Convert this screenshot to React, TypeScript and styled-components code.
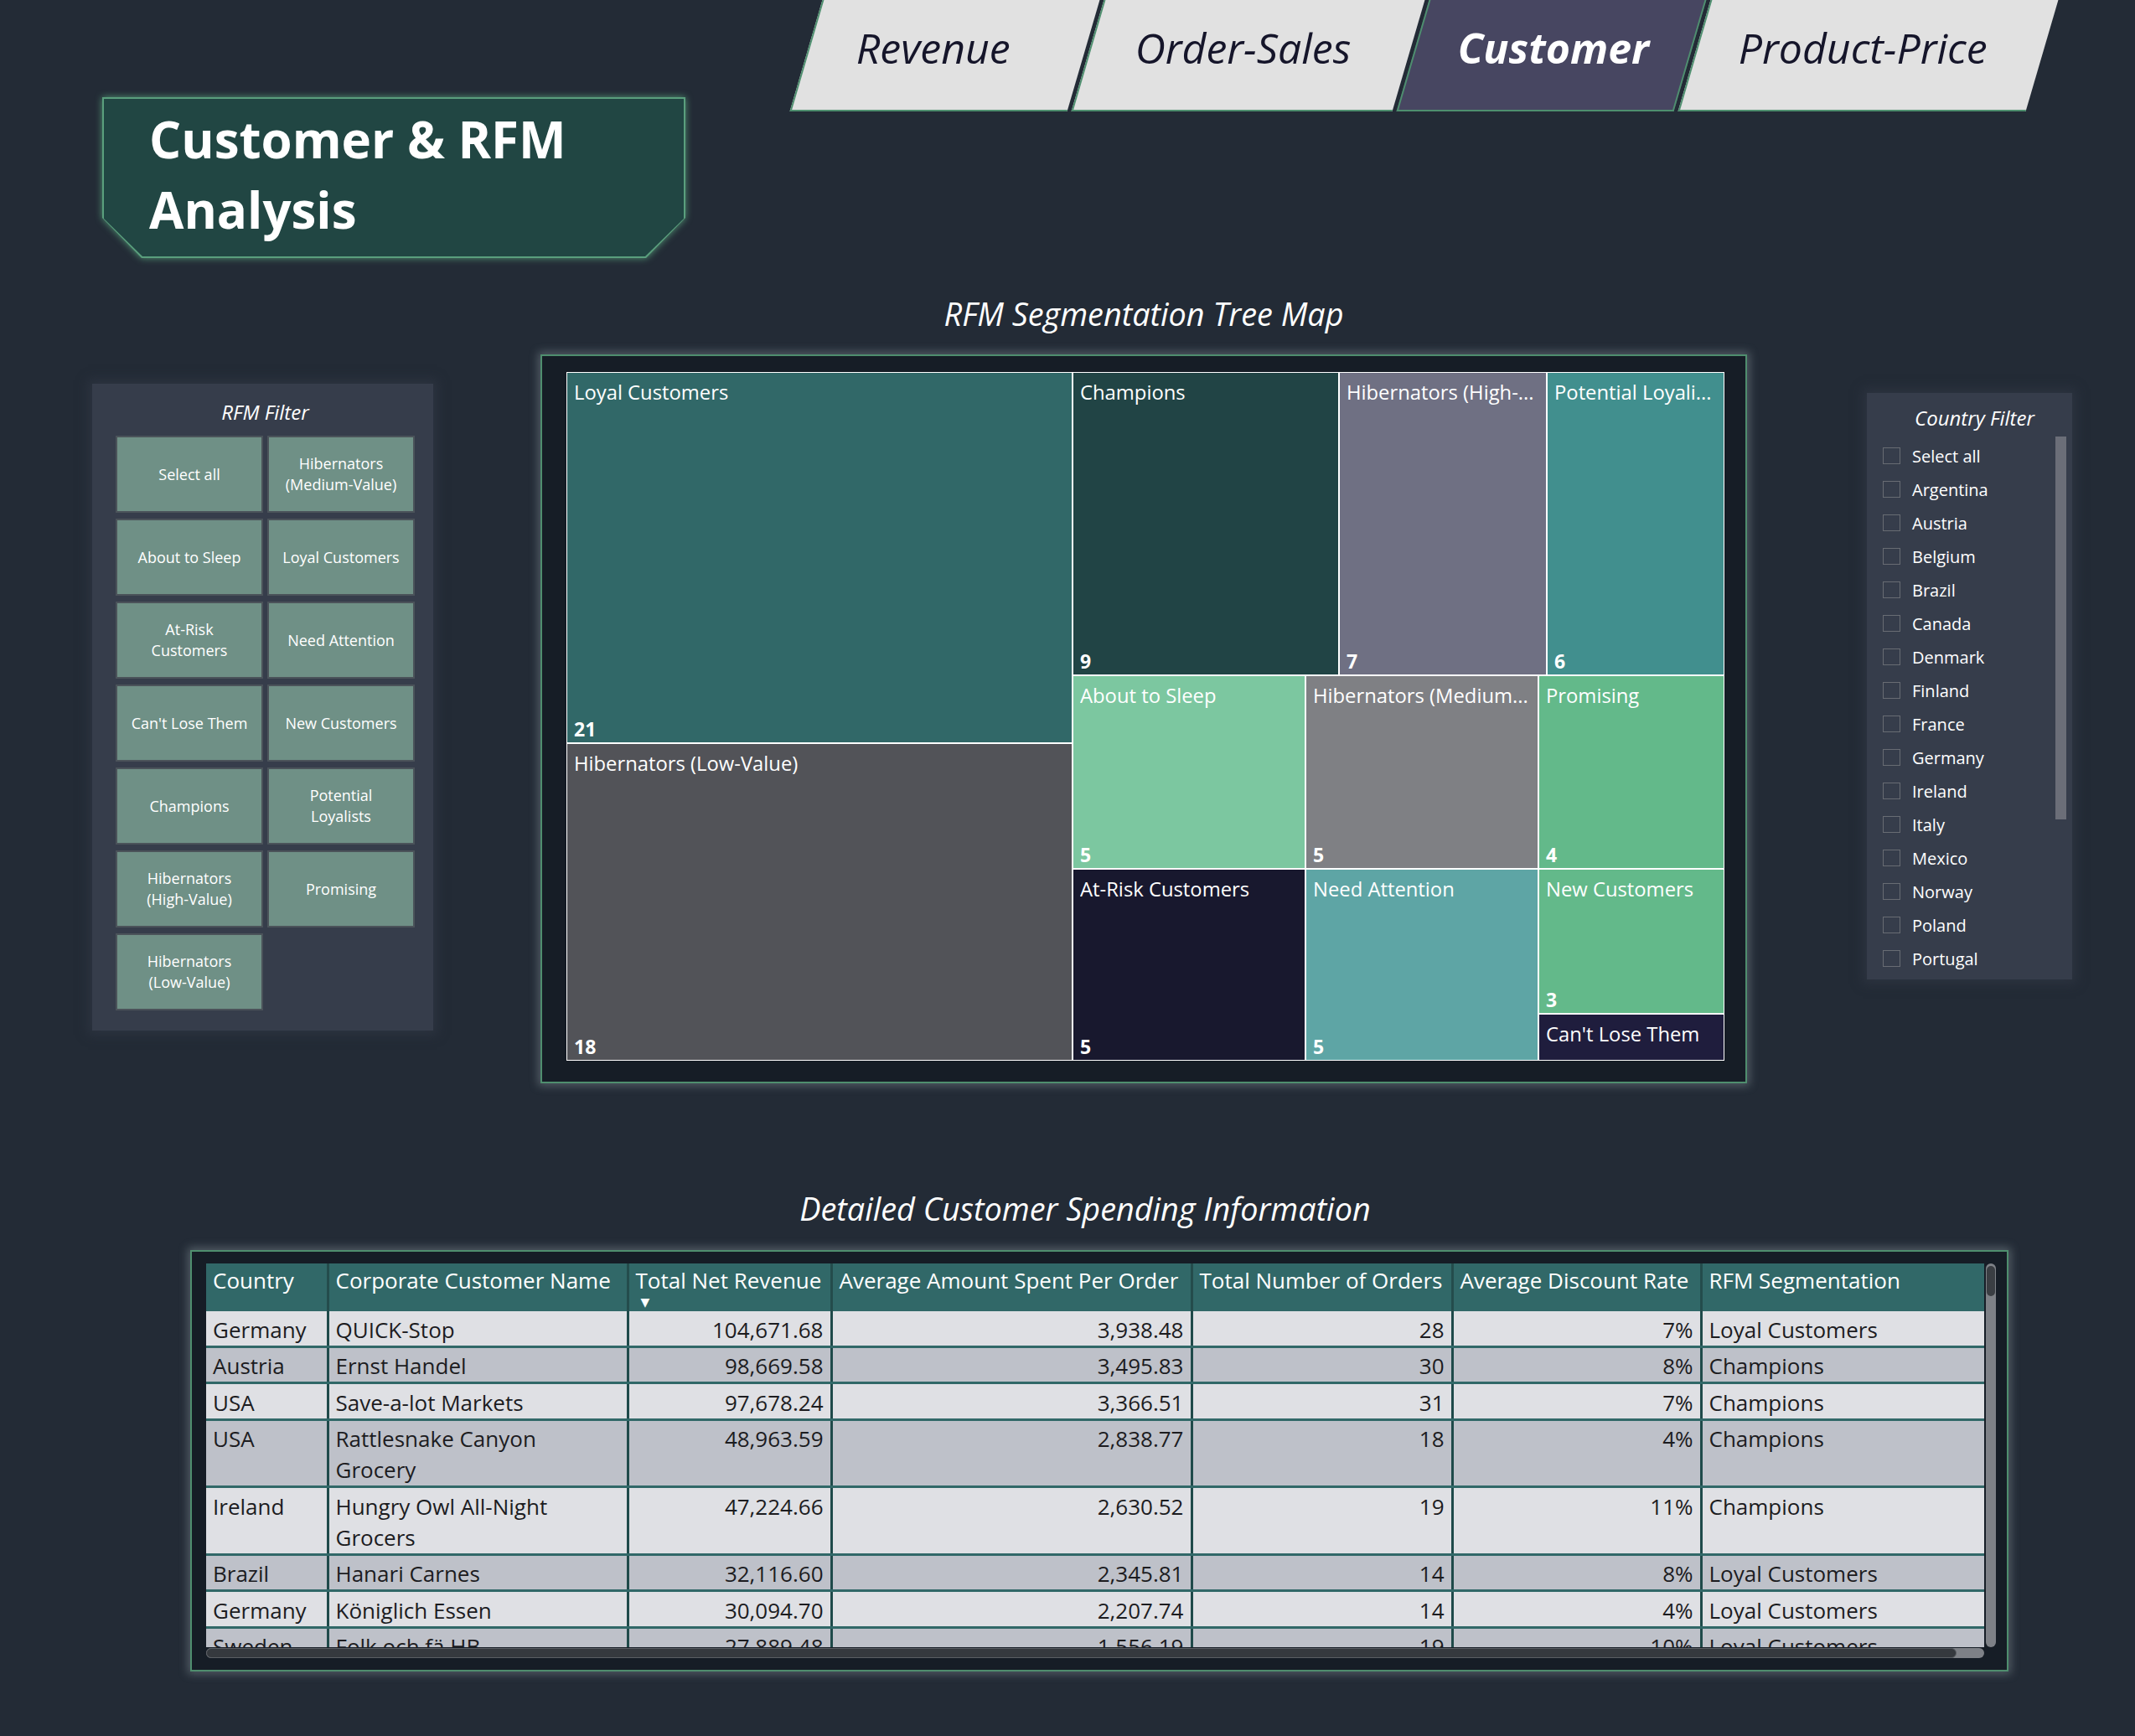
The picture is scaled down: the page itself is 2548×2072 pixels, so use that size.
import React from "react";
import styled, { createGlobalStyle } from "styled-components";

const FONT = `"Open Sans", "Noto Sans", "DejaVu Sans", sans-serif`;

const GlobalStyle = createGlobalStyle`
  *, *::before, *::after { box-sizing: border-box; }
  html, body { margin: 0; padding: 0; background: #232b36; }
  body { font-family: ${FONT}; }
`;

const Page = styled.main`
  width: 2548px;
  height: 2072px;
  overflow: hidden;
  background: #232b36;
  color: #ffffff;
  font-family: ${FONT};
`;

/* ---------------- Header ---------------- */

const Header = styled.header`
  display: flex;
  align-items: flex-start;
  height: 308px;
  padding-left: 122px;
`;

const TitleGlow = styled.div`
  flex: none;
  width: 696px;
  height: 192px;
  margin-top: 116px;
  filter: drop-shadow(0 0 4px rgba(98, 186, 138, 0.75));
`;

const TitleFrame = styled.div`
  width: 100%;
  height: 100%;
  padding: 2px;
  background: #5a9f7d;
  clip-path: polygon(0 0, 100% 0, 100% 144px, calc(100% - 47px) 100%, 47px 100%, 0 144px);
`;

const TitleFill = styled.div`
  width: 100%;
  height: 100%;
  background: #214643;
  clip-path: polygon(0 0, 100% 0, 100% 143px, calc(100% - 46px) 100%, 46px 100%, 0 143px);
  padding: 6px 0 0 54px;
`;

const PageTitle = styled.h1`
  margin: 0;
  font-size: 60px;
  line-height: 84px;
  font-weight: 700;
  color: #ffffff;
`;

const Tabs = styled.nav`
  display: flex;
  gap: 5px;
  margin-left: 144px;
`;

const Tab = styled.div<{ $w: number; $shift: number; $active?: boolean }>`
  flex: none;
  width: ${(p) => p.$w}px;
  height: 133px;
  transform: skewX(-16.3deg);
  background: ${(p) => (p.$active ? "#474661" : "#e1e1e1")};
  border-left: 2px solid #4e8f6f;
  border-bottom: 2px solid #4e8f6f;
  border-right: ${(p) => (p.$active ? "2px solid #4e8f6f" : "none")};
  display: flex;
  align-items: center;
  justify-content: center;
  padding-bottom: 18px;
  padding-right: ${(p) => p.$shift * 2}px;
`;

const TabLabel = styled.span<{ $active?: boolean }>`
  display: inline-block;
  transform: skewX(16.3deg);
  font-style: italic;
  font-size: 50px;
  line-height: 60px;
  white-space: nowrap;
  font-weight: ${(p) => (p.$active ? 700 : 400)};
  color: ${(p) => (p.$active ? "#ffffff" : "#15152a")};
`;

/* ---------------- Middle ---------------- */

const Middle = styled.section`
  display: flex;
  align-items: flex-start;
  height: 987px;
  padding-left: 110px;
`;

const SidePanel = styled.aside<{ $w: number; $h: number; $top: number; $left?: number }>`
  flex: none;
  width: ${(p) => p.$w}px;
  height: ${(p) => p.$h}px;
  margin-top: ${(p) => p.$top}px;
  margin-left: ${(p) => p.$left ?? 0}px;
  background: #363d4b;
  box-shadow: 0 0 12px 5px rgba(50, 57, 70, 0.6);
`;

const PanelTitle = styled.h3`
  margin: 0;
  font-size: 24px;
  line-height: 32px;
  font-style: italic;
  font-weight: 400;
  text-align: center;
  color: #ffffff;
`;

const RfmInner = styled.div`
  padding: 18px 22px 0 28px;
  display: flex;
  flex-direction: column;
  gap: 12px;
`;

const ButtonGrid = styled.div`
  display: grid;
  grid-template-columns: 176px 176px;
  grid-auto-rows: 92px;
  column-gap: 5px;
  row-gap: 7px;
`;

const SegButton = styled.div`
  display: flex;
  align-items: center;
  justify-content: center;
  text-align: center;
  padding: 0 14px;
  background: #6f9086;
  border: 2px solid #4b535a;
  color: #ffffff;
  font-size: 18px;
  line-height: 25px;
`;

const CenterCol = styled.div`
  flex: none;
  width: 1440px;
  margin-left: 128px;
  display: flex;
  flex-direction: column;
`;

const SectionTitle = styled.h2<{ $top: number; $bottom: number; $shift?: number }>`
  margin: ${(p) => p.$top}px ${(p) => p.$shift ?? 0}px ${(p) => p.$bottom}px 0;
  font-size: 37.8px;
  line-height: 50px;
  font-style: italic;
  font-weight: 400;
  text-align: center;
  color: #ffffff;
`;

const TreeBox = styled.div`
  height: 870px;
  background: #161d26;
  border: 2px solid #4f8e6e;
  box-shadow: 0 0 10px 3px rgba(170, 182, 188, 0.35);
  padding: 19px 25px 25px 29px;
`;

const TreeArea = styled.div`
  display: flex;
  width: 1382px;
  height: 822px;
`;

const TreeColumn = styled.div<{ $w: number }>`
  flex: none;
  display: flex;
  flex-direction: column;
  width: ${(p) => p.$w}px;
`;

const TreeRow = styled.div<{ $h: number }>`
  flex: none;
  display: flex;
  height: ${(p) => p.$h}px;
`;

const Tile = styled.div<{ $bg: string; $w?: number; $h?: number }>`
  flex: none;
  width: ${(p) => (p.$w ? `${p.$w}px` : "auto")};
  height: ${(p) => (p.$h ? `${p.$h}px` : "auto")};
  background: ${(p) => p.$bg};
  border: 1px solid #ffffff;
  display: flex;
  flex-direction: column;
  justify-content: space-between;
  padding: 6px 4px 1px 8px;
  overflow: hidden;
`;

const TileLabel = styled.span`
  font-size: 23.8px;
  line-height: 34px;
  white-space: nowrap;
  overflow: hidden;
  color: #ffffff;
`;

const TileValue = styled.span`
  font-size: 23px;
  line-height: 30px;
  font-weight: 700;
  color: #ffffff;
`;

const CountryInner = styled.div`
  padding: 14px 7px 0 19px;
  display: flex;
  flex-direction: column;
`;

const CountryBody = styled.div`
  display: flex;
  margin-top: 5px;
`;

const CountryList = styled.ul`
  list-style: none;
  margin: 4px 0 0 0;
  padding: 0;
  flex: 1;
`;

const CountryItem = styled.li`
  display: flex;
  align-items: center;
  gap: 14px;
  height: 40px;
  font-size: 20px;
  color: #ffffff;
`;

const CheckBox = styled.span`
  flex: none;
  width: 21px;
  height: 20px;
  border: 1.5px solid #686c73;
`;

const SlicerScroll = styled.div`
  flex: none;
  width: 13px;
  height: 457px;
  margin-top: 1px;
  background: #6b6e78;
`;

/* ---------------- Table ---------------- */

const TableSection = styled.section`
  display: flex;
  flex-direction: column;
  padding-left: 227px;
  width: 2397px;
`;

const TableBox = styled.div`
  height: 503px;
  background: #161d26;
  border: 2px solid #4f8e6e;
  box-shadow: 0 0 10px 3px rgba(170, 182, 188, 0.35);
  padding: 14px 13px 14px 17px;
`;

const ScrollFrame = styled.div`
  display: grid;
  grid-template-columns: 2122px 14px;
  grid-template-rows: 458px 13px;
`;

const Viewport = styled.div`
  overflow: hidden;
`;

const VScroll = styled.div`
  margin-left: 2px;
  width: 12px;
  height: 458px;
  border-radius: 6px;
  background: #7e8187;
  padding: 3px 1px;
`;

const VThumb = styled.div`
  height: 36px;
  border-radius: 5px;
  background: #3a3e43;
`;

const HScroll = styled.div`
  margin-top: 1px;
  height: 12px;
  border-radius: 6px;
  background: #7e8187;
`;

const HThumb = styled.div`
  width: 2089px;
  height: 12px;
  border-radius: 6px;
  background: #35393e;
  border: 1px solid #5b5f64;
`;

const DataTable = styled.table`
  width: 2122px;
  table-layout: fixed;
  border-collapse: collapse;
  font-size: 26px;
  line-height: 37px;
`;

const ColW = styled.col<{ $w: number }>`
  width: ${(p) => p.$w}px;
`;

const Th = styled.th`
  height: 57px;
  padding: 2px 8px 0 8px;
  vertical-align: top;
  text-align: left;
  font-weight: 400;
  white-space: nowrap;
  overflow: hidden;
  background: #316868;
  color: #ffffff;
  border-right: 3px solid #244c4c;
  &:last-child { border-right: none; }
`;

const SortArrow = styled.span`
  display: block;
  margin-left: 6px;
  font-size: 14px;
  line-height: 14px;
  color: #ffffff;
`;

const Tr = styled.tr<{ $alt: boolean }>`
  background: ${(p) => (p.$alt ? "#bec1c9" : "#dfe0e4")};
`;

const Td = styled.td<{ $num?: boolean }>`
  padding: 3.5px ${(p) => (p.$num ? "8px" : "24px")} 0 8px;
  vertical-align: top;
  text-align: ${(p) => (p.$num ? "right" : "left")};
  color: #1c1c1f;
  border-bottom: 3px solid #316868;
  border-right: 3px solid #1f4a4a;
  &:last-child { border-right: none; }
`;

/* ---------------- Data ---------------- */

const tabs = [
  { label: "Revenue", w: 331, shift: 18 },
  { label: "Order-Sales", w: 383, shift: 10 },
  { label: "Customer", w: 331, shift: 0, active: true },
  { label: "Product-Price", w: 415, shift: 10 },
];

const segments = [
  "Select all",
  "Hibernators (Medium-Value)",
  "About to Sleep",
  "Loyal Customers",
  "At-Risk Customers",
  "Need Attention",
  "Can't Lose Them",
  "New Customers",
  "Champions",
  "Potential Loyalists",
  "Hibernators (High-Value)",
  "Promising",
  "Hibernators (Low-Value)",
];

const countries = [
  "Select all",
  "Argentina",
  "Austria",
  "Belgium",
  "Brazil",
  "Canada",
  "Denmark",
  "Finland",
  "France",
  "Germany",
  "Ireland",
  "Italy",
  "Mexico",
  "Norway",
  "Poland",
  "Portugal",
];

const columns = [
  { label: "Country", w: 145 },
  { label: "Corporate Customer Name", w: 358 },
  { label: "Total Net Revenue", w: 243, sorted: true },
  { label: "Average Amount Spent Per Order", w: 430 },
  { label: "Total Number of Orders", w: 311 },
  { label: "Average Discount Rate", w: 297 },
  { label: "RFM Segmentation", w: 338 },
];

const rows = [
  ["Germany", "QUICK-Stop", "104,671.68", "3,938.48", "28", "7%", "Loyal Customers"],
  ["Austria", "Ernst Handel", "98,669.58", "3,495.83", "30", "8%", "Champions"],
  ["USA", "Save-a-lot Markets", "97,678.24", "3,366.51", "31", "7%", "Champions"],
  ["USA", "Rattlesnake Canyon Grocery", "48,963.59", "2,838.77", "18", "4%", "Champions"],
  ["Ireland", "Hungry Owl All-Night Grocers", "47,224.66", "2,630.52", "19", "11%", "Champions"],
  ["Brazil", "Hanari Carnes", "32,116.60", "2,345.81", "14", "8%", "Loyal Customers"],
  ["Germany", "Königlich Essen", "30,094.70", "2,207.74", "14", "4%", "Loyal Customers"],
  ["Sweden", "Folk och fä HB", "27,889.48", "1,556.19", "19", "10%", "Loyal Customers"],
  ["Venezuela", "HILARIÓN-Abastos", "23,611.58", "1,311.75", "18", "4%", "Loyal Customers"],
];

const numericCols = new Set([2, 3, 4, 5]);

type TileProps = { label: string; value?: string; bg: string; w?: number; h?: number };

const TreeTile = ({ label, value, bg, w, h }: TileProps) => (
  <Tile $bg={bg} $w={w} $h={h}>
    <TileLabel>{label}</TileLabel>
    {value && <TileValue>{value}</TileValue>}
  </Tile>
);

export default function App() {
  return (
    <Page>
      <GlobalStyle />
      <Header>
        <TitleGlow>
          <TitleFrame>
            <TitleFill>
              <PageTitle>Customer &amp; RFM Analysis</PageTitle>
            </TitleFill>
          </TitleFrame>
        </TitleGlow>
        <Tabs>
          {tabs.map((t) => (
            <Tab key={t.label} $w={t.w} $shift={t.shift} $active={t.active}>
              <TabLabel $active={t.active}>{t.label}</TabLabel>
            </Tab>
          ))}
        </Tabs>
      </Header>

      <Middle>
        <SidePanel $w={407} $h={772} $top={150}>
          <RfmInner>
            <PanelTitle>RFM Filter</PanelTitle>
            <ButtonGrid>
              {segments.map((s) => (
                <SegButton key={s}>{s}</SegButton>
              ))}
            </ButtonGrid>
          </RfmInner>
        </SidePanel>

        <CenterCol>
          <SectionTitle $top={42} $bottom={23}>
            RFM Segmentation Tree Map
          </SectionTitle>
          <TreeBox>
            <TreeArea>
              <TreeColumn $w={604}>
                <TreeTile label="Loyal Customers" value="21" bg="#316868" h={443} />
                <TreeTile label="Hibernators (Low-Value)" value="18" bg="#525358" h={379} />
              </TreeColumn>
              <TreeColumn $w={778}>
                <TreeRow $h={362}>
                  <TreeTile label="Champions" value="9" bg="#214445" w={318} />
                  <TreeTile label="Hibernators (High-..." value="7" bg="#6f7083" w={248} />
                  <TreeTile label="Potential Loyali..." value="6" bg="#418f8e" w={212} />
                </TreeRow>
                <TreeRow $h={231}>
                  <TreeTile label="About to Sleep" value="5" bg="#7cc7a0" w={278} />
                  <TreeTile label="Hibernators (Medium..." value="5" bg="#7f8084" w={278} />
                  <TreeTile label="Promising" value="4" bg="#63b98a" w={222} />
                </TreeRow>
                <TreeRow $h={229}>
                  <TreeTile label="At-Risk Customers" value="5" bg="#18182e" w={278} />
                  <TreeTile label="Need Attention" value="5" bg="#5ea5a5" w={278} />
                  <TreeColumn $w={222}>
                    <TreeTile label="New Customers" value="3" bg="#63b98a" h={173} />
                    <TreeTile label="Can't Lose Them" bg="#1f1d3d" h={56} />
                  </TreeColumn>
                </TreeRow>
              </TreeColumn>
            </TreeArea>
          </TreeBox>
        </CenterCol>

        <SidePanel $w={245} $h={700} $top={161} $left={143}>
          <CountryInner>
            <PanelTitle>Country Filter</PanelTitle>
            <CountryBody>
              <CountryList>
                {countries.map((c) => (
                  <CountryItem key={c}>
                    <CheckBox />
                    {c}
                  </CountryItem>
                ))}
              </CountryList>
              <SlicerScroll />
            </CountryBody>
          </CountryInner>
        </SidePanel>
      </Middle>

      <TableSection>
        <SectionTitle $top={123} $bottom={24} $shift={34}>
          Detailed Customer Spending Information
        </SectionTitle>
        <TableBox>
          <ScrollFrame>
            <Viewport>
              <DataTable>
                <colgroup>
                  {columns.map((c) => (
                    <ColW key={c.label} $w={c.w} />
                  ))}
                </colgroup>
                <thead>
                  <tr>
                    {columns.map((c) => (
                      <Th key={c.label}>
                        {c.label}
                        {c.sorted && <SortArrow>▼</SortArrow>}
                      </Th>
                    ))}
                  </tr>
                </thead>
                <tbody>
                  {rows.map((r, i) => (
                    <Tr key={i} $alt={i % 2 === 1}>
                      {r.map((cell, j) => (
                        <Td key={j} $num={numericCols.has(j)}>
                          {cell}
                        </Td>
                      ))}
                    </Tr>
                  ))}
                </tbody>
              </DataTable>
            </Viewport>
            <VScroll>
              <VThumb />
            </VScroll>
            <HScroll>
              <HThumb />
            </HScroll>
          </ScrollFrame>
        </TableBox>
      </TableSection>
    </Page>
  );
}
